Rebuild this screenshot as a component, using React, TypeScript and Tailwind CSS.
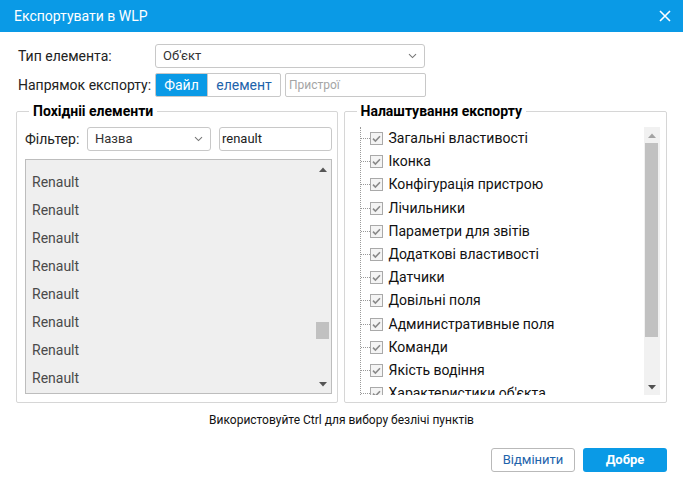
import React from "react";

const Chevron = () => (
  <svg width="9" height="6" viewBox="0 0 9 6" className="shrink-0">
    <path d="M1 1.2 L4.5 4.6 L8 1.2" fill="none" stroke="#777" strokeWidth="1.1" />
  </svg>
);

const Check = () => (
  <svg width="13" height="13" viewBox="0 0 13 13" className="shrink-0">
    <rect x="0.5" y="0.5" width="12" height="12" fill="#f4f4f4" stroke="#a9a9a9" />
    <path d="M3 6.6 L5.4 9 L10 4.2" fill="none" stroke="#8a8a8a" strokeWidth="1.6" />
  </svg>
);

const TriUp = ({ color }: { color: string }) => (
  <svg width="8" height="5" viewBox="0 0 8 5">
    <path d="M0 5 L4 0.5 L8 5 Z" fill={color} />
  </svg>
);
const TriDown = ({ color }: { color: string }) => (
  <svg width="8" height="5" viewBox="0 0 8 5">
    <path d="M0 0 L4 4.5 L8 0 Z" fill={color} />
  </svg>
);

const treeItems = [
  "Загальні властивості",
  "Іконка",
  "Конфігурація пристрою",
  "Лічильники",
  "Параметри для звітів",
  "Додаткові властивості",
  "Датчики",
  "Довільні поля",
  "Административные поля",
  "Команди",
  "Якість водіння",
  "Характеристики об'єкта",
];

export default function App() {
  return (
    <div className="w-[683px] h-[478px] bg-white font-['Roboto','Liberation_Sans',sans-serif] text-[#222] overflow-hidden">
      <div className="h-8 bg-[#0a9ae6] flex items-center justify-between pl-[14px] pr-[12px]">
        <span className="text-white text-[14px]">Експортувати в WLP</span>
        <svg width="12" height="12" viewBox="0 0 12 12">
          <path d="M1 1 L11 11 M11 1 L1 11" stroke="white" strokeWidth="1.6" />
        </svg>
      </div>

      <div className="px-4">
        <div className="mt-3 ml-[2px] flex items-center h-6">
          <span className="w-[137px] text-[14px]">Тип елемента:</span>
          <div className="w-[270px] h-6 border border-[#c8c8c8] rounded-[3px] flex items-center justify-between pl-[7px] pr-[7px] text-[13px] text-[#333]">
            <span>Об'єкт</span>
            <Chevron />
          </div>
        </div>

        <div className="mt-[5px] ml-[2px] flex items-center h-[24px]">
          <span className="w-[137px] text-[14px]">Напрямок експорту:</span>
          <div className="flex h-[24px] border border-[#c8c8c8] rounded-[2px] overflow-hidden text-[14px]">
            <div className="w-[51px] bg-[#0a9ae6] text-white flex items-center justify-center">Файл</div>
            <div className="w-[73px] text-[#1d63ab] flex items-center justify-center border-l border-[#c8c8c8]">елемент</div>
          </div>
          <div className="ml-[4px] w-[141px] h-[24px] border border-[#c8c8c8] rounded-[2px] flex items-center pl-[3px] text-[12px] text-[#a5a5a5]">
            Пристрої
          </div>
        </div>

        <div className="mt-[6px] flex gap-[6px]">
          <fieldset className="w-[323px] h-[300px] border border-[#d6d6d6] rounded-[2px]">
            <legend className="ml-[12px] px-[4px] text-[14px] leading-4 font-bold text-black">Похідніі елементи</legend>
            <div className="mt-[8px] ml-[8px] flex items-center h-[24px]">
              <span className="w-[62px] text-[14px]">Фільтер:</span>
              <div className="w-[124px] h-[24px] border border-[#c8c8c8] rounded-[3px] flex items-center justify-between pl-[7px] pr-[7px] text-[13px] text-[#333]">
                <span>Назва</span>
                <Chevron />
              </div>
              <div className="ml-[8px] w-[113px] h-[24px] border border-[#c8c8c8] rounded-[3px] flex items-center pl-[2px] text-[13px] text-[#222]">
                renault
              </div>
            </div>
            <div className="mt-[8px] ml-[8px] w-[307px] h-[235px] border border-[#bdbdbd] bg-[#efefef] flex">
              <div className="flex-1 pt-[8px] pl-[6px] overflow-hidden">
                {Array.from({ length: 8 }).map((_, i) => (
                  <div key={i} className="h-[28px] flex items-center text-[14px] text-[#4a4a4a]">
                    Renault
                  </div>
                ))}
              </div>
              <div className="w-[16px] flex flex-col">
                <div className="h-[16px] flex items-center justify-center pt-[2px] pr-[1px]">
                  <TriUp color="#555" />
                </div>
                <div className="flex-1">
                  <div className="mt-[146px] ml-[1px] w-[13px] h-[17px] bg-[#c1c1c1]" />
                </div>
                <div className="h-[16px] flex items-center justify-center pb-[2px] pr-[1px]">
                  <TriDown color="#555" />
                </div>
              </div>
            </div>
          </fieldset>

          <fieldset className="w-[325px] h-[300px] border border-[#d6d6d6] rounded-[2px]">
            <legend className="ml-[12px] px-[4px] text-[14px] leading-4 font-bold text-black">Налаштування експорту</legend>
            <div className="mt-[8px] flex h-[268px]">
              <div className="ml-[15px] w-[284px] h-full overflow-hidden border-l border-dotted border-[#9a9a9a]">
                {treeItems.map((t) => (
                  <div key={t} className="h-[23.2px] flex items-center">
                    <span className="w-[9px] border-t border-dotted border-[#9a9a9a]" />
                    <Check />
                    <span className="ml-[6px] text-[14px] text-[#111] whitespace-nowrap">{t}</span>
                  </div>
                ))}
              </div>
              <div className="w-[16px] h-full bg-[#f1f1f1] flex flex-col">
                <div className="h-[16px] flex items-center justify-center">
                  <TriUp color="#a3a3a3" />
                </div>
                <div className="flex-1">
                  <div className="ml-[1px] w-[13px] h-[194px] bg-[#c1c1c1]" />
                </div>
                <div className="h-[16px] flex items-center justify-center">
                  <TriDown color="#505050" />
                </div>
              </div>
            </div>
          </fieldset>
        </div>
      </div>

      <div className="mt-[9px] text-center text-[12px] leading-4 text-[#111]">
        Використовуйте Ctrl для вибору безлічі пунктів
      </div>

      <div className="mt-[20px] flex justify-end gap-[8px] pr-[16px]">
        <button className="w-[84px] h-[24px] border border-[#b9b9b9] rounded-[3px] bg-white text-[13px] text-[#1d63ab]">
          Відмінити
        </button>
        <button className="w-[84px] h-[24px] rounded-[3px] bg-[#0a9ae6] text-[13px] font-bold text-white">
          Добре
        </button>
      </div>
    </div>
  );
}
